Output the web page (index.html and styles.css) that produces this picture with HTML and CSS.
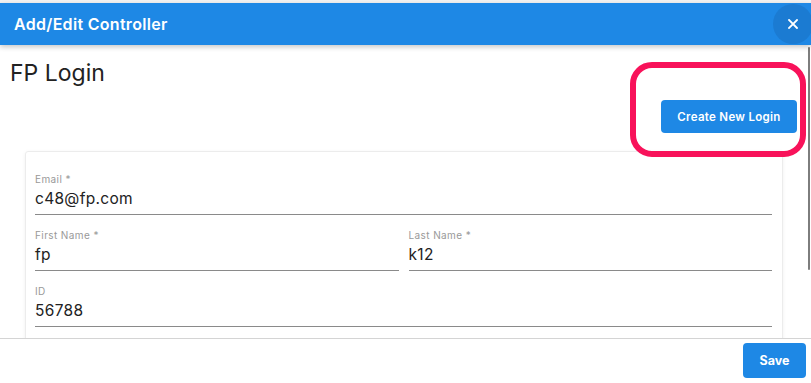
FILE: index.html
```html
<!DOCTYPE html>
<html>
<head>
	<meta http-equiv="Content-Type" content="text/html; charset=utf-8" />
	<title>Add/Edit Controller</title>
	<link rel="stylesheet" href="styles.css">
</head>
<body>
	<div class="modal">
		<div class="modal-head">
			<h2>Add/Edit Controller</h2>
			<button class="close" type="button">
				<svg width="10" height="10" viewBox="0 0 10 10"><path d="M1 1 L9 9 M9 1 L1 9" stroke="#fff" stroke-width="1.8" stroke-linecap="square"/></svg>
			</button>
		</div>
		<div class="modal-body">
			<div class="body-inner">
				<h1 class="page-title">FP Login</h1>
				<div class="toolbar">
					<span class="mark"><button class="btn btn-create" type="button">Create New Login</button></span>
				</div>
				<div class="card">
					<div class="field">
						<label>Email *</label>
						<div class="value">c48@fp.com</div>
					</div>
					<div class="row">
						<div class="field">
							<label>First Name *</label>
							<div class="value">fp</div>
						</div>
						<div class="field">
							<label>Last Name *</label>
							<div class="value">k12</div>
						</div>
					</div>
					<div class="field">
						<label>ID</label>
						<div class="value">56788</div>
					</div>
				</div>
			</div>
			<div class="scrollbar"><div class="thumb"></div></div>
		</div>
		<div class="modal-foot">
			<button class="btn btn-save" type="button">Save</button>
		</div>
	</div>
</body>
</html>
```
FILE: styles.css
```css
*{margin: 0;padding: 0;box-sizing: border-box;}
html,body{ width: 811px; height: 383px; overflow: hidden; background: #fff; }
body{ font-family: Inter, "Open Sans", "Liberation Sans", sans-serif; color: #212121; }
button{ font-family: inherit; border: none; cursor: pointer; }

.modal{ display: flex; flex-direction: column; height: 383px; padding-top: 3px; background: #f2f2f2; }
.modal-head{ position: relative; z-index: 2; display: flex; align-items: center; justify-content: space-between; height: 42px; padding-left: 14px; background: #1e88e5; box-shadow: 0 2px 5px rgba(0,0,0,0.22); }
.modal-head h2{ font-size: 16px; font-weight: 600; color: #fff; letter-spacing: 0.3px; }
.modal-head .close{ display: flex; align-items: center; justify-content: center; width: 40px; height: 40px; margin-right: -2px; border-radius: 50%; background: #1b7bd2; }

.modal-body{ flex: 1; display: flex; overflow: hidden; background: #fff; }
.body-inner{ flex: 1; padding: 13px 9px 0 10px; }
.page-title{ font-size: 23px; font-weight: 400; line-height: 30px; color: #222; }
.toolbar{ display: flex; justify-content: flex-end; margin-top: 12px; }
.mark{ position: relative; display: inline-block; }
.mark::after{ content: ""; position: absolute; left: -31px; right: -9px; top: -38px; bottom: -24px; border: 6px solid #f8125a; border-radius: 22px; pointer-events: none; z-index: 3; }
.btn{ background: #1e88e5; color: #fff; font-weight: 600; border-radius: 4px; }
.btn-create{ width: 136px; height: 33px; font-size: 11.5px; letter-spacing: 0.3px; }

.card{ height: 200px; margin: 18px 14px 0 15px; padding: 19px 10px 20px 9px; border: 1px solid #ececec; border-radius: 3px; box-shadow: 0 1px 4px rgba(0,0,0,0.06); }
.row{ display: flex; gap: 10px; }
.row .field{ flex: 1; }
.field{ margin-bottom: 12px; border-bottom: 1px solid #8a8a8a; padding-bottom: 3px; }
.field label{ display: block; font-size: 10px; line-height: 16px; color: #999; letter-spacing: 0.4px; }
.field .value{ font-size: 15.5px; line-height: 24px; height: 24px; color: #222; letter-spacing: 0.3px; }

.scrollbar{ width: 5px; padding: 2px 1px 0 2px; }
.scrollbar .thumb{ width: 2px; height: 223px; background: #7d7d7d; border-radius: 1px; }

.modal-foot{ display: flex; justify-content: flex-end; height: 45px; padding: 4px 5px 0 0; background: #fff; border-top: 1px solid #d4d4d4; }
.btn-save{ width: 63px; height: 35px; font-size: 12.5px; font-weight: 700; }
```
